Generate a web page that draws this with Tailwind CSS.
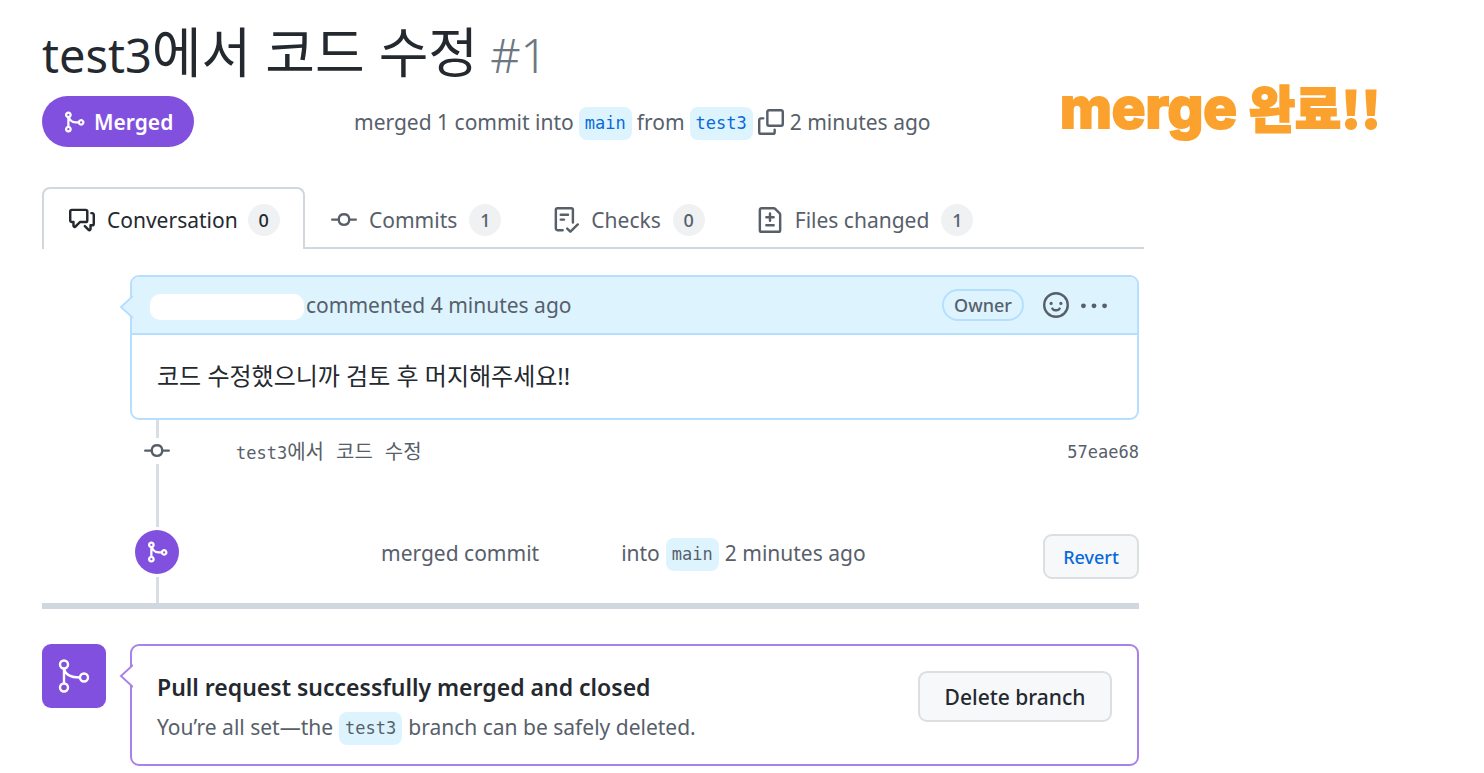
<!DOCTYPE html>
<html lang="ko">
<head>
  <meta charset="UTF-8">
  <meta name="viewport" content="width=device-width, initial-scale=1.0">
  <title>test3에서 코드 수정 #1</title>
  <script src="https://cdn.jsdelivr.net/npm/@tailwindcss/browser@4"></script>
</head>
<body class="bg-white text-[#24292f] font-['Noto_Sans','Noto_Sans_CJK_KR',sans-serif] text-[21px] leading-[32px]">
  <!-- shared icons -->
  <svg class="hidden">
    <symbol id="merge" viewBox="0 0 16 16"><path fill-rule="evenodd" d="M5 3.254V3.25v.005a.75.75 0 110-.005v.004zm.45 1.9a2.25 2.25 0 10-1.95.218v5.256a2.25 2.25 0 101.5 0V7.123A5.735 5.735 0 009.25 9h1.378a2.251 2.251 0 100-1.5H9.25a4.25 4.25 0 01-3.8-2.346zM12.75 9a.75.75 0 100-1.5.75.75 0 000 1.5zm-8.5 4.5a.75.75 0 100-1.5.75.75 0 000 1.5z"/></symbol>
    <symbol id="commit" viewBox="0 0 16 16"><path fill-rule="evenodd" d="M10.5 7.75a2.5 2.5 0 11-5 0 2.5 2.5 0 015 0zm1.43.75a4.002 4.002 0 01-7.86 0H.75a.75.75 0 110-1.5h3.32a4.001 4.001 0 017.86 0h3.32a.75.75 0 110 1.5h-3.32z"/></symbol>
  </svg>

  <header class="flex items-start justify-between pl-[42px] pr-[103px] pt-6">
    <div>
      <h1 class="h-[60px] text-[47px] leading-[56px] whitespace-nowrap">test3<span class="text-[54px]">에서 코드 수정</span> <span class="font-light text-[#6e7781]">#1</span></h1>
      <div class="flex items-center mt-3">
        <span class="flex items-center gap-2 h-[51px] w-[152px] pl-5 rounded-full bg-[#8250df] text-white font-semibold">
          <svg class="size-6 fill-current"><use href="#merge"/></svg>Merged
        </span>
        <p class="flex items-center ml-40 text-[#57606a] whitespace-nowrap">
          merged 1 commit into
          <a href="#" class="mx-[5px] mt-1 px-[6px] rounded-lg bg-[#ddf4ff] text-[#0969da] font-['DejaVu_Sans_Mono',monospace] text-[17px] leading-[33px]">main</a>
          from
          <a href="#" class="mx-[5px] mt-1 px-[6px] rounded-lg bg-[#ddf4ff] text-[#0969da] font-['DejaVu_Sans_Mono',monospace] text-[17px] leading-[33px]">test3</a>
          <button type="button" aria-label="Copy" class="mr-[6px]">
            <svg class="size-[26px] fill-current" viewBox="0 0 16 16"><path fill-rule="evenodd" d="M0 6.75C0 5.784.784 5 1.75 5h1.5a.75.75 0 010 1.5h-1.5a.25.25 0 00-.25.25v7.5c0 .138.112.25.25.25h7.5a.25.25 0 00.25-.25v-1.5a.75.75 0 011.5 0v1.5A1.75 1.75 0 019.25 16h-7.5A1.75 1.75 0 010 14.25v-7.5zM5 1.75C5 .784 5.784 0 6.75 0h7.5C15.216 0 16 .784 16 1.75v7.5A1.75 1.75 0 0114.25 11h-7.5A1.75 1.75 0 015 9.25v-7.5zm1.75-.25a.25.25 0 00-.25.25v7.5c0 .138.112.25.25.25h7.5a.25.25 0 00.25-.25v-7.5a.25.25 0 00-.25-.25h-7.5z"/></svg>
          </button>
          2 minutes ago
        </p>
      </div>
    </div>
    <strong class="mt-12 text-[56px] leading-[68px] font-extrabold text-[#fba12d] whitespace-nowrap font-['Inter',sans-serif] [-webkit-text-stroke:2px_#fba12d] [stroke-linejoin:round]">merge <span class="text-[50px] font-black font-['Noto_Sans_CJK_KR',sans-serif]">완료!!</span></strong>
  </header>

  <main class="pl-[42px] pr-[340px] mt-10">
    <!-- tabs -->
    <nav class="flex h-[62px] text-[#57606a] whitespace-nowrap">
      <a href="#" class="flex items-center w-[263px] pl-[25px] pt-[2px] rounded-t-lg border-2 border-b-0 border-[#d0d7de] text-[#24292f]">
        <svg class="size-[26px] mr-3 fill-current" viewBox="0 0 16 16"><path fill-rule="evenodd" d="M1.5 2.75a.25.25 0 01.25-.25h8.5a.25.25 0 01.25.25v5.5a.25.25 0 01-.25.25h-3.5a.75.75 0 00-.53.22L3.5 11.44V9.25a.75.75 0 00-.75-.75h-1a.25.25 0 01-.25-.25v-5.5zM1.75 1A1.75 1.75 0 000 2.75v5.5C0 9.216.784 10 1.75 10H2v1.543a1.457 1.457 0 002.487 1.03L7.061 10h3.189A1.75 1.75 0 0012 8.25v-5.5A1.75 1.75 0 0010.25 1h-8.5zM14.5 4.75a.25.25 0 00-.25-.25h-.5a.75.75 0 110-1.5h.5c.966 0 1.75.784 1.75 1.75v5.5A1.75 1.75 0 0114.25 12H14v1.543a1.457 1.457 0 01-2.487 1.03L9.22 12.28a.75.75 0 111.06-1.06l2.22 2.22v-2.19a.75.75 0 01.75-.75h1a.25.25 0 00.25-.25v-5.5z"/></svg>
        Conversation
        <span class="ml-[10px] size-8 rounded-full bg-[#eff1f3] text-center text-[18px] font-medium">0</span>
      </a>
      <div class="flex flex-1 items-center border-b-2 border-[#d0d7de] pt-[6px]">
        <a href="#" class="flex items-center ml-[26px]">
          <svg class="size-[26px] mr-3 fill-current"><use href="#commit"/></svg>
          Commits
          <span class="ml-3 size-8 rounded-full bg-[#eff1f3] text-center text-[18px] font-medium">1</span>
        </a>
        <a href="#" class="flex items-center ml-[52px]">
          <svg class="size-[26px] mr-3 fill-current" viewBox="0 0 16 16"><path fill-rule="evenodd" d="M2.5 1.75a.25.25 0 01.25-.25h8.5a.25.25 0 01.25.25v7.736a.75.75 0 101.5 0V1.75A1.75 1.75 0 0011.25 0h-8.5A1.75 1.75 0 001 1.75v11.5c0 .966.784 1.75 1.75 1.75h3.17a.75.75 0 000-1.5H2.75a.25.25 0 01-.25-.25V1.75zM4.75 4a.75.75 0 000 1.5h4.5a.75.75 0 000-1.5h-4.5zM4 7.75A.75.75 0 014.75 7h2a.75.75 0 010 1.5h-2A.75.75 0 014 7.75zm11.774 3.537a.75.75 0 00-1.048-1.074L10.7 14.145 9.281 12.72a.75.75 0 00-1.062 1.058l1.943 1.95a.75.75 0 001.055.008l4.557-4.45z"/></svg>
          Checks
          <span class="ml-3 size-8 rounded-full bg-[#eff1f3] text-center text-[18px] font-medium">0</span>
        </a>
        <a href="#" class="flex items-center ml-[52px]">
          <svg class="size-[26px] mr-3 fill-current" viewBox="0 0 16 16"><path fill-rule="evenodd" d="M2.75 1.5a.25.25 0 00-.25.25v12.5c0 .138.112.25.25.25h10.5a.25.25 0 00.25-.25V4.664a.25.25 0 00-.073-.177l-2.914-2.914a.25.25 0 00-.177-.073H2.75zM1 1.75C1 .784 1.784 0 2.75 0h7.586c.464 0 .909.184 1.237.513l2.914 2.914c.329.328.513.773.513 1.237v9.586A1.75 1.75 0 0113.25 16H2.75A1.75 1.75 0 011 14.25V1.75zm7 1.5a.75.75 0 01.75.75v1.5h1.5a.75.75 0 010 1.5h-1.5v1.5a.75.75 0 01-1.5 0V7h-1.5a.75.75 0 010-1.5h1.5V4A.75.75 0 018 3.25zm-3 8a.75.75 0 01.75-.75h4.5a.75.75 0 010 1.5h-4.5a.75.75 0 01-.75-.75z"/></svg>
          Files changed
          <span class="ml-3 size-8 rounded-full bg-[#eff1f3] text-center text-[18px] font-medium">1</span>
        </a>
      </div>
    </nav>

    <div class="pr-[5px] pt-[26px] text-[#57606a]">
      <!-- comment -->
      <article class="relative ml-[88px] rounded-[9px] border-2 border-[#b6dfff]">
        <svg class="absolute -left-[13px] top-[18px] w-[14px] h-6" viewBox="0 0 14 24"><path d="M14 1L2 12l12 11" fill="#ddf4ff" stroke="#b6dfff" stroke-width="2"/></svg>
        <div class="flex items-center h-[58px] pl-[18px] pr-[30px] rounded-t-[7px] bg-[#ddf4ff] border-b-2 border-[#b6dfff]">
          <span class="w-[154px] h-[26px] mt-1 mr-[2px] rounded-[10px] bg-white"></span>
          <span>commented 4 minutes ago</span>
          <span class="ml-auto w-[82px] rounded-full border-2 border-[#b6dfff] text-center text-[18px] leading-[28px] font-medium">Owner</span>
          <button type="button" aria-label="Add reaction" class="ml-[19px]">
            <svg class="size-[26px] fill-current" viewBox="0 0 16 16"><path fill-rule="evenodd" d="M1.5 8a6.5 6.5 0 1113 0 6.5 6.5 0 01-13 0zM8 0a8 8 0 100 16A8 8 0 008 0zM5 8a1 1 0 100-2 1 1 0 000 2zm7-1a1 1 0 11-2 0 1 1 0 012 0zM5.32 9.636a.75.75 0 011.038.175l.007.009c.103.118.22.222.35.31.264.178.683.37 1.285.37.602 0 1.02-.192 1.285-.371.13-.088.247-.192.35-.31l.007-.008a.75.75 0 111.222.87c-.2.26-.45.49-.73.68-.63.418-1.37.638-2.127.629-.946 0-1.652-.308-2.126-.63a3.331 3.331 0 01-.73-.68.75.75 0 01.176-1.045z"/></svg>
          </button>
          <button type="button" aria-label="More" class="ml-3">
            <svg class="size-[26px] fill-current" viewBox="0 0 16 16"><circle cx="1.5" cy="8.5" r="1.5"/><circle cx="8" cy="8.5" r="1.5"/><circle cx="14.5" cy="8.5" r="1.5"/></svg>
          </button>
        </div>
        <p class="px-[25px] pt-[25px] pb-[26px] text-[24px] text-[#24292f]">코드 수정했으니까 검토 후 머지해주세요!!</p>
      </article>

      <!-- commit -->
      <div class="flex ml-[93px] h-[107px]">
        <div class="flex flex-col items-center w-11">
          <span class="w-[3px] h-[18px] bg-[#d8dee4]"></span>
          <svg class="size-[26px] fill-current"><use href="#commit"/></svg>
          <span class="w-[3px] flex-1 bg-[#d8dee4]"></span>
        </div>
        <div class="flex flex-1 justify-between pl-[57px] pt-4 font-['DejaVu_Sans_Mono','Noto_Sans_CJK_KR',monospace] text-[17px]">
          <a href="#">test3<span class="text-[20px]">에서 코드 수정</span></a>
          <a href="#">57eae68</a>
        </div>
      </div>

      <!-- merge event -->
      <div class="flex ml-[93px] h-[76px]">
        <div class="flex flex-col items-center w-11">
          <span class="flex items-center justify-center mt-[3px] mb-[3px] size-11 shrink-0 rounded-full bg-[#8250df] text-white">
            <svg class="size-6 fill-current"><use href="#merge"/></svg>
          </span>
          <span class="w-[3px] flex-1 bg-[#d8dee4]"></span>
        </div>
        <div class="flex flex-1 items-start justify-between pl-[202px] pt-[7px]">
          <p class="flex items-center whitespace-nowrap">
            merged commit
            <span class="ml-[82px]">into</span>
            <a href="#" class="mx-[6px] mt-1 px-[6px] rounded-lg bg-[#ddf4ff] font-['DejaVu_Sans_Mono',monospace] text-[17px] leading-[33px]">main</a>
            2 minutes ago
          </p>
          <button type="button" class="w-24 h-[45px] rounded-[9px] border-2 border-[#dcdfe2] bg-[#f6f8fa] text-[#0969da] text-[18px] font-medium">Revert</button>
        </div>
      </div>
      <hr class="h-[6px] border-0 bg-[#d0d7de]">

      <!-- merge box -->
      <section class="flex items-start gap-6 pt-[35px]">
        <div class="flex items-center justify-center size-16 rounded-[9px] bg-[#8250df]">
          <svg class="size-[38px]" viewBox="0 0 38 38" fill="none" stroke="white" stroke-width="2.4">
            <circle cx="9" cy="7.5" r="4"/><circle cx="9" cy="30.5" r="4"/><circle cx="29" cy="20.5" r="4"/>
            <path d="M9 11.5v15M9 11.5c1 6 7 9 16 9"/>
          </svg>
        </div>
        <div class="relative flex flex-1 items-start justify-between h-[122px] pl-[25px] pr-[25px] pt-[25px] rounded-[9px] border-2 border-[#a881eb]">
          <svg class="absolute -left-[13px] top-[18px] w-[14px] h-6" viewBox="0 0 14 24"><path d="M14 1L2 12l12 11" fill="white" stroke="#a881eb" stroke-width="2"/></svg>
          <div>
            <h2 class="text-[23px] text-[#24292f] font-semibold">Pull request successfully merged and closed</h2>
            <p class="flex items-center mt-[5px] whitespace-nowrap">
              You’re all set—the
              <a href="#" class="mx-[6px] mt-1 px-[6px] rounded-lg bg-[#ddf4ff] font-['DejaVu_Sans_Mono',monospace] text-[17px] leading-[33px]">test3</a>
              branch can be safely deleted.
            </p>
          </div>
          <button type="button" class="w-[194px] h-[51px] rounded-[9px] border-2 border-[#dcdfe2] bg-[#f6f8fa] text-[#24292f] font-medium">Delete branch</button>
        </div>
      </section>
    </div>
  </main>
</body>
</html>
